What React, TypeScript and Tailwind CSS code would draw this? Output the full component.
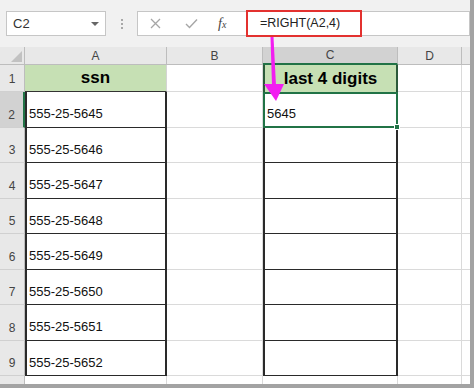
import React from "react";

const rows = [
  { n: 2, ssn: "555-25-5645", last: "5645" },
  { n: 3, ssn: "555-25-5646", last: "" },
  { n: 4, ssn: "555-25-5647", last: "" },
  { n: 5, ssn: "555-25-5648", last: "" },
  { n: 6, ssn: "555-25-5649", last: "" },
  { n: 7, ssn: "555-25-5650", last: "" },
  { n: 8, ssn: "555-25-5651", last: "" },
  { n: 9, ssn: "555-25-5652", last: "" },
];

const font = { fontFamily: '"Liberation Sans", Arial, sans-serif' };

function RowHeader({ n, selected }: { n: number; selected?: boolean }) {
  return (
    <div
      className={`w-[25px] shrink-0 flex items-end justify-center pb-[3px] text-[12px] text-[#444] border-b border-b-[#d0d0d0] border-r ${
        selected ? "bg-[#d2d2d2] border-r-[#217346] border-r-2" : "bg-[#e8e8e8] border-r-[#bdbdbd]"
      }`}
    >
      {n}
    </div>
  );
}

export default function App() {
  return (
    <div
      className="relative w-[474px] h-[388px] overflow-hidden bg-white border-r-4 border-b-4 border-[#a3a3a3]"
      style={font}
    >
      {/* Formula bar */}
      <div className="h-[47px] bg-[#f1f1f1] flex items-start pt-[11px] pl-[6px]">
        <div className="w-[100px] h-[25px] bg-white border border-[#c6c6c6] flex items-center justify-between pl-[6px] pr-[6px]">
          <span className="text-[13px] text-[#333]">C2</span>
          <span className="w-0 h-0 border-l-[4px] border-r-[4px] border-t-[4px] border-l-transparent border-r-transparent border-t-[#666]" />
        </div>
        <div className="w-[31px] h-[25px] flex flex-col items-center justify-center gap-[2px]">
          <span className="w-[2px] h-[2px] bg-[#a8a8a8]" />
          <span className="w-[2px] h-[2px] bg-[#a8a8a8]" />
          <span className="w-[2px] h-[2px] bg-[#a8a8a8]" />
        </div>
        <div className="flex-1 h-[25px] bg-white border border-[#c6c6c6] flex items-center">
          <div className="w-[108px] h-full flex items-center">
            <svg className="ml-[12px]" width="11" height="11" viewBox="0 0 11 11">
              <path d="M1 1 L10 10 M10 1 L1 10" stroke="#a6a6a6" strokeWidth="1.3" fill="none" />
            </svg>
            <svg className="ml-[24px]" width="13" height="11" viewBox="0 0 13 11">
              <path d="M1 6 L4.5 9.5 L12 1.5" stroke="#a6a6a6" strokeWidth="1.4" fill="none" />
            </svg>
            <span
              className="ml-[20px] text-[14px] italic text-[#444]"
              style={{ fontFamily: '"Liberation Serif", "Times New Roman", serif' }}
            >
              f<span className="text-[10px]">x</span>
            </span>
          </div>
          <div className="w-[116px] h-[27px] -mt-[1px] border-2 border-[#e3312f] flex items-center pl-[12px] text-[12.5px] text-[#222]">
            =RIGHT(A2,4)
          </div>
        </div>
      </div>

      {/* Column headers */}
      <div className="flex h-[18px] bg-[#e8e8e8] text-[12px] text-[#444]">
        <div className="w-[25px] shrink-0 relative border-r border-b border-[#bdbdbd]">
          <svg className="absolute right-[2px] bottom-[2px]" width="11" height="11" viewBox="0 0 11 11">
            <path d="M11 0 L11 11 L0 11 Z" fill="#c2c2c2" />
          </svg>
        </div>
        <div className="w-[142px] shrink-0 flex items-center justify-center border-r border-b border-[#bdbdbd]">A</div>
        <div className="w-[96px] shrink-0 flex items-center justify-center border-r border-b border-[#bdbdbd]">B</div>
        <div className="w-[135px] shrink-0 flex items-center justify-center bg-[#d2d2d2] border-r border-r-[#bdbdbd] border-b-2 border-b-[#217346]">C</div>
        <div className="w-[64px] shrink-0 flex items-center justify-center border-r border-b border-[#bdbdbd]">D</div>
        <div className="flex-1 border-b border-[#bdbdbd]" />
      </div>

      {/* Row 1 */}
      <div className="flex h-[27px]">
        <RowHeader n={1} />
        <div className="w-[142px] shrink-0 flex items-center justify-center bg-[#c6e0b4] border-b border-b-[#333] border-r border-r-[#d4d4d4] text-[17px] font-bold text-black">
          ssn
        </div>
        <div className="w-[96px] shrink-0 border-r border-b border-[#dadada]" />
        <div className="w-[135px] shrink-0 flex items-center justify-center bg-[#c6e0b4] border-l-2 border-r-2 border-[#2b5a3a] text-[17px] font-bold text-black">
          last 4 digits
        </div>
        <div className="w-[64px] shrink-0 border-r border-b border-[#dadada]" />
        <div className="flex-1 border-b border-[#dadada]" />
      </div>

      {/* Data rows */}
      {rows.map((r) => (
        <div key={r.n} className="flex h-[35.5px]">
          <RowHeader n={r.n} selected={r.n === 2} />
          <div className="w-[142px] shrink-0 flex items-end pl-[2px] pb-[3px] border-l-2 border-r-2 border-b border-[#2a2a2a] text-[13px] text-[#111]">
            {r.ssn}
          </div>
          <div className="w-[96px] shrink-0 border-r border-b border-[#dadada]" />
          {r.n === 2 ? (
            <div className="relative w-[135px] shrink-0 flex items-end pl-[2px] pb-[2px] border-2 border-[#217346] text-[13px] text-[#111]">
              {r.last}
              <span className="absolute -right-[4px] -bottom-[4px] w-[6px] h-[6px] bg-[#217346] border border-white" />
            </div>
          ) : (
            <div className="w-[135px] shrink-0 border-l-2 border-r-2 border-b border-[#2a2a2a]" />
          )}
          <div className="w-[64px] shrink-0 border-r border-b border-[#dadada]" />
          <div className="flex-1 border-b border-[#dadada]" />
        </div>
      ))}

      {/* Row 10 (partly visible) */}
      <div className="flex h-[35.5px]">
        <div className="w-[25px] shrink-0 flex items-start justify-center pt-[6px] text-[12px] leading-[14px] text-[#444] bg-[#e8e8e8] border-r border-[#bdbdbd]">
          10
        </div>
        <div className="w-[142px] shrink-0 border-r border-[#dadada]" />
        <div className="w-[96px] shrink-0 border-r border-[#dadada]" />
        <div className="w-[135px] shrink-0 border-r border-[#dadada]" />
        <div className="w-[64px] shrink-0 border-r border-[#dadada]" />
        <div className="flex-1" />
      </div>

      {/* Magenta arrow */}
      <svg className="absolute left-0 top-0 pointer-events-none" width="474" height="388" viewBox="0 0 474 388">
        <path d="M270.5 37 L273.5 37 L276 86 L272 86 Z" fill="#f21ef0" />
        <path d="M264 84 L284 84 L276 101 Z" fill="#f21ef0" />
      </svg>
    </div>
  );
}
